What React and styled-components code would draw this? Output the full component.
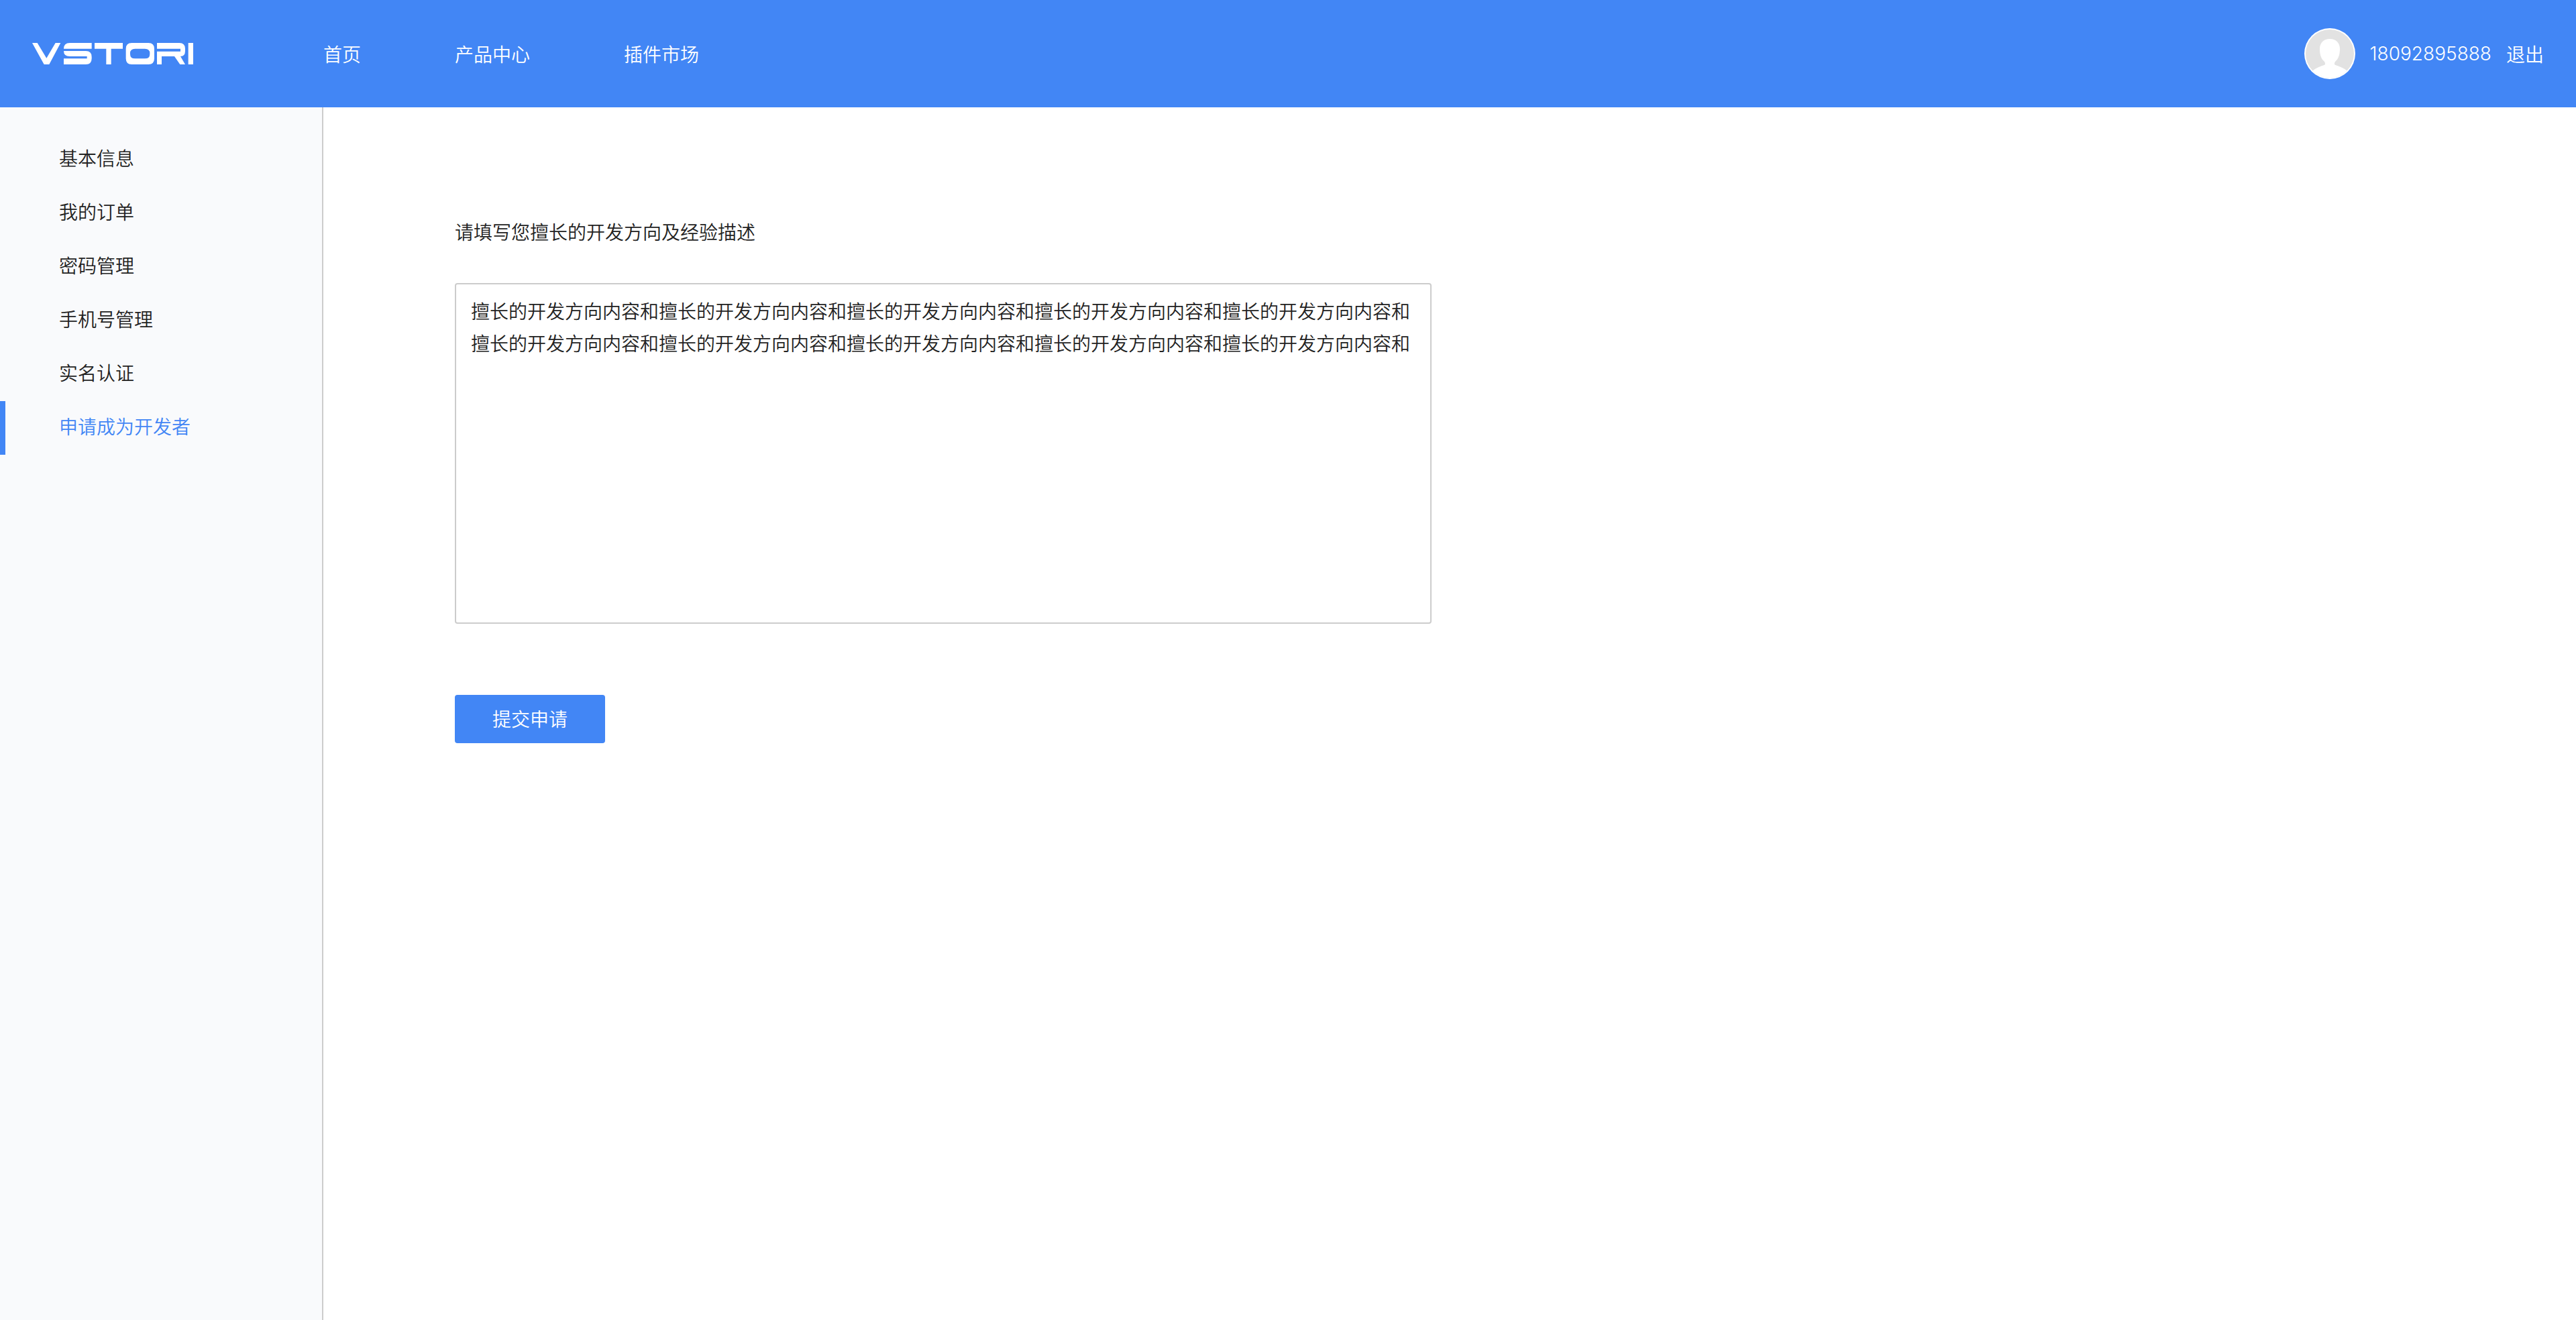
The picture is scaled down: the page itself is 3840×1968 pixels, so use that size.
import React from "react";
import styled, { createGlobalStyle } from "styled-components";

const GlobalStyle = createGlobalStyle`
  * { box-sizing: border-box; }
  body {
    margin: 0;
    background: #fff;
    color: #222;
    font-family: "Noto Sans CJK SC", sans-serif;
    font-size: 28px;
    font-weight: 350;
    line-height: 48px;
  }
  a { color: inherit; text-decoration: none; }
`;

const Page = styled.div`
  display: flex;
  flex-direction: column;
  min-height: 100vh;
`;

const Header = styled.header`
  display: flex;
  align-items: center;
  height: 160px;
  padding-right: 48px;
  background: #4286f5;
  color: #fff;
`;

const Brand = styled.a`
  display: flex;
  width: 482px;
  padding-left: 48px;
`;

const Nav = styled.nav`
  display: flex;
  gap: 140px;
`;

const User = styled.div`
  display: flex;
  align-items: center;
  gap: 22px;
  margin-left: auto;
`;

const Phone = styled.span`
  font-family: Inter, sans-serif;
  font-weight: 300;
`;

const Body = styled.div`
  display: flex;
  flex: 1;
`;

const Sidebar = styled.nav`
  flex: none;
  width: 482px;
  padding-top: 38px;
  border-right: 2px solid #ccc;
  background: #f9fafc;
`;

const SideLink = styled.a`
  display: block;
  padding: 13px 0 19px 80px;
  border-left: 8px solid ${(p) => (p.$active ? "#4286f5" : "transparent")};
  color: ${(p) => (p.$active ? "#4286f5" : "inherit")};
`;

const Form = styled.form`
  display: flex;
  flex: 1;
  flex-direction: column;
  align-items: flex-start;
  padding: 161px 196px;
`;

const Textarea = styled.textarea`
  display: block;
  width: 1456px;
  max-width: 100%;
  height: 508px;
  margin: 53px 0 106px;
  padding: 15px 22px;
  border: 2px solid #ccc;
  border-radius: 4px;
  outline: none;
  resize: none;
  background: #fff;
  color: inherit;
  font: inherit;
`;

const Submit = styled.button`
  padding: 11px 56px 13px;
  border: 0;
  border-radius: 4px;
  background: #4286f5;
  color: #fff;
  font: inherit;
`;

function Logo() {
  return (
    <svg width="240" height="32" viewBox="0 0 720 96" fill="#fff" aria-hidden="true">
      <path d="M0 0H23L64 68L104 0H127L76 96H53Z" />
      <path d="M266 0V26H141Q141 0 168 0ZM141 36H240Q266 36 266 62V70Q266 96 240 96H141V70H245V60H168Q141 60 141 36Z" />
      <path d="M279 0H405V26H353V96H331V26H279Z" />
      <path fillRule="evenodd" d="M445 0H520Q546 0 546 26V70Q546 96 520 96H445Q419 96 419 70V26Q419 0 445 0ZM460 26Q438 26 438 46V50Q438 70 460 70H504Q526 70 526 50V46Q526 26 504 26Z" />
      <path d="M558 0H658Q684 0 684 26V36Q684 60 663 60L684 96H661L636 60H579V96H558V38H663V26H558Z" />
      <path d="M698 0H720V96H698Z" />
    </svg>
  );
}

function Avatar() {
  return (
    <svg width="76" height="76" viewBox="0 0 228 228" aria-hidden="true">
      <defs>
        <clipPath id="avatar-disc">
          <circle cx="114" cy="114" r="108" />
        </clipPath>
      </defs>
      <circle cx="114" cy="114" r="114" fill="#fff" />
      <circle cx="114" cy="114" r="108" fill="#e2e2e2" />
      <path
        clipPath="url(#avatar-disc)"
        fill="#fff"
        d="M114 48C141 48 159 66 159 92C159 118 153 136 140 148C135 153 133 159 137 164C158 170 176 178 192 191L192 228H36V191C52 178 70 170 91 164C95 159 93 153 88 148C75 136 69 118 69 92C69 66 87 48 114 48Z"
      />
    </svg>
  );
}

const navItems = ["首页", "产品中心", "插件市场"];
const sideItems = ["基本信息", "我的订单", "密码管理", "手机号管理", "实名认证", "申请成为开发者"];
const experience = "擅长的开发方向内容和".repeat(10);

export default function App() {
  return (
    <Page lang="zh-CN">
      <GlobalStyle />
      <Header>
        <Brand href="#" aria-label="VSTORI">
          <Logo />
        </Brand>
        <Nav>
          {navItems.map((t) => (
            <a key={t} href="#">{t}</a>
          ))}
        </Nav>
        <User>
          <Avatar />
          <Phone>18092895888</Phone>
          <a href="#">退出</a>
        </User>
      </Header>
      <Body>
        <Sidebar>
          {sideItems.map((t) => (
            <SideLink key={t} href="#" $active={t === "申请成为开发者"}>{t}</SideLink>
          ))}
        </Sidebar>
        <Form onSubmit={(e) => e.preventDefault()}>
          <label htmlFor="experience">请填写您擅长的开发方向及经验描述</label>
          <Textarea id="experience" defaultValue={experience} spellCheck={false} />
          <Submit type="submit">提交申请</Submit>
        </Form>
      </Body>
    </Page>
  );
}
